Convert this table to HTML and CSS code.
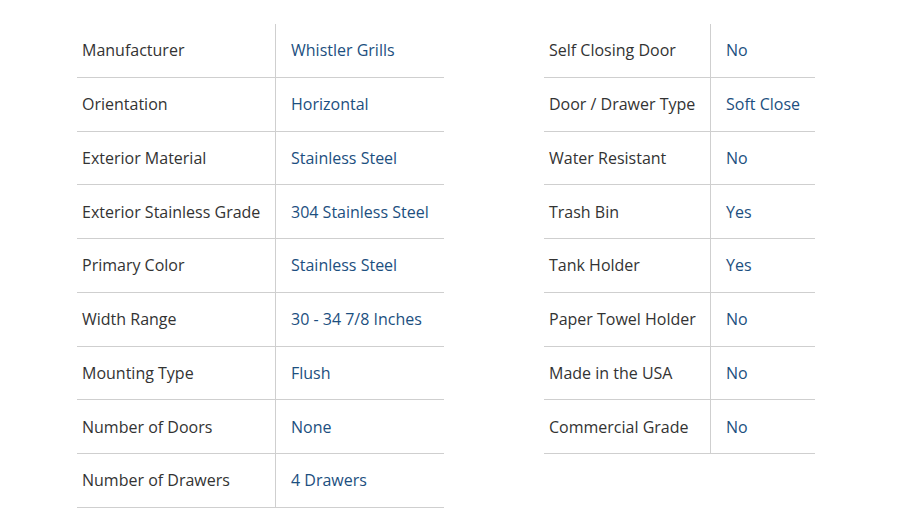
FILE: index.html
```html
<!DOCTYPE html>
<html lang="en">
<head>
<meta charset="utf-8">
<title>Specifications</title>
<link rel="stylesheet" href="styles.css">
</head>
<body>
<div class="specs">
  <div class="spec-table spec-left">
    <div class="label">Manufacturer</div><div class="value">Whistler Grills</div>
    <div class="label">Orientation</div><div class="value">Horizontal</div>
    <div class="label">Exterior Material</div><div class="value">Stainless Steel</div>
    <div class="label">Exterior Stainless Grade</div><div class="value">304 Stainless Steel</div>
    <div class="label">Primary Color</div><div class="value">Stainless Steel</div>
    <div class="label">Width Range</div><div class="value">30 - 34 7/8 Inches</div>
    <div class="label">Mounting Type</div><div class="value">Flush</div>
    <div class="label">Number of Doors</div><div class="value">None</div>
    <div class="label">Number of Drawers</div><div class="value">4 Drawers</div>
  </div>
  <div class="spec-table spec-right">
    <div class="label">Self Closing Door</div><div class="value">No</div>
    <div class="label">Door / Drawer Type</div><div class="value">Soft Close</div>
    <div class="label">Water Resistant</div><div class="value">No</div>
    <div class="label">Trash Bin</div><div class="value">Yes</div>
    <div class="label">Tank Holder</div><div class="value">Yes</div>
    <div class="label">Paper Towel Holder</div><div class="value">No</div>
    <div class="label">Made in the USA</div><div class="value">No</div>
    <div class="label">Commercial Grade</div><div class="value">No</div>
  </div>
</div>
</body>
</html>
```
FILE: styles.css
```css
html, body {
  margin: 0;
  padding: 0;
  background: #ffffff;
}
body {
  font-family: "Open Sans", "Liberation Sans", sans-serif;
  font-size: 16px;
  line-height: 22px;
}
.specs {
  display: flex;
  align-items: flex-start;
  gap: 100px;
  padding: 24px 0 0 77px;
}
.spec-table {
  display: grid;
  grid-auto-rows: 53.75px;
}
.spec-left {
  grid-template-columns: 199px 168px;
}
.spec-right {
  grid-template-columns: 167px 104px;
}
.label, .value {
  display: flex;
  align-items: center;
  box-sizing: border-box;
  border-bottom: 1px solid #cfcfcf;
  white-space: nowrap;
}
.label {
  color: #333333;
  padding-left: 5px;
  border-right: 1px solid #cfcfcf;
}
.value {
  color: #1c4f80;
  padding-left: 15px;
}
```
